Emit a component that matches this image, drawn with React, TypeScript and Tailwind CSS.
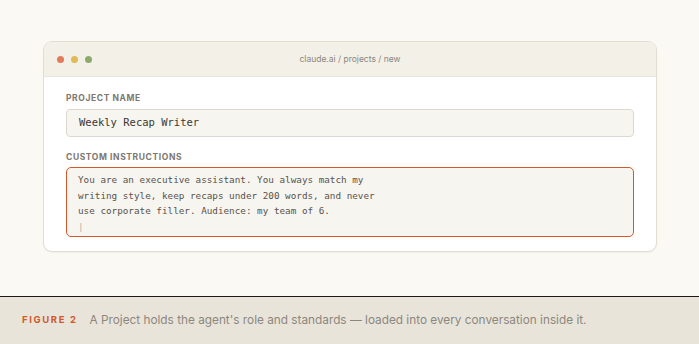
import React from 'react'

const sans = { fontFamily: 'Inter, "Noto Sans", sans-serif' }
const mono = { fontFamily: '"DejaVu Sans Mono", "Liberation Mono", monospace' }

export default function App() {
  return (
    <div className="w-[699px] h-[344px] flex flex-col bg-[#fbf9f4] overflow-hidden" style={sans}>
      <section className="h-[297px] shrink-0 border-b border-[#1c1b19] pt-[41px] px-[43px]">
        <div className="w-[614px] rounded-[9px] border border-[#e2ddd2] bg-white overflow-hidden shadow-[0_1px_2px_rgba(0,0,0,0.04)]">
          <div className="relative h-[35px] bg-[#f3f0e8] border-b border-[#ebe6dc] flex items-center px-[13px]">
            <div className="flex gap-[7px]">
              <span className="w-[7px] h-[7px] rounded-full bg-[#e07b5c]" />
              <span className="w-[7px] h-[7px] rounded-full bg-[#e3b957]" />
              <span className="w-[7px] h-[7px] rounded-full bg-[#8eaa6b]" />
            </div>
            <div className="absolute inset-0 flex items-center justify-center text-[8.5px] text-[#8c877d]">
              claude.ai / projects / new
            </div>
          </div>
          <div className="px-[22px] pt-[17px] pb-[14px]">
            <div className="text-[8.5px] font-bold tracking-[0.07em] text-[#7d776c] leading-none">PROJECT NAME</div>
            <div className="mt-[6px] h-[28px] rounded-[4px] border border-[#ddd8cd] bg-[#f7f5f0] flex items-center px-[12px] text-[10.5px] text-[#3a3833]" style={mono}>
              Weekly Recap Writer
            </div>
            <div className="mt-[16px] text-[8.5px] font-bold tracking-[0.07em] text-[#7d776c] leading-none">CUSTOM INSTRUCTIONS</div>
            <div className="mt-[6px] h-[70px] rounded-[5px] border border-[#d4582b] bg-[#f7f5f0] pl-[11px] pr-[12px] pt-[4px] text-[9.3px] leading-[15.5px] text-[#57534c]" style={mono}>
              <div>You are an executive assistant. You always match my</div>
              <div>writing style, keep recaps under 200 words, and never</div>
              <div>use corporate filler. Audience: my team of 6.</div>
              <div className="text-[#b5b0a6]">|</div>
            </div>
          </div>
        </div>
      </section>
      <footer className="flex-1 bg-[#e9e4da] flex items-center px-[22px] gap-[12px]">
        <span className="text-[9.5px] font-bold tracking-[0.17em] text-[#cf5a2c]">FIGURE 2</span>
        <span className="text-[11.8px] text-[#8c877d]">A Project holds the agent's role and standards — loaded into every conversation inside it.</span>
      </footer>
    </div>
  )
}
